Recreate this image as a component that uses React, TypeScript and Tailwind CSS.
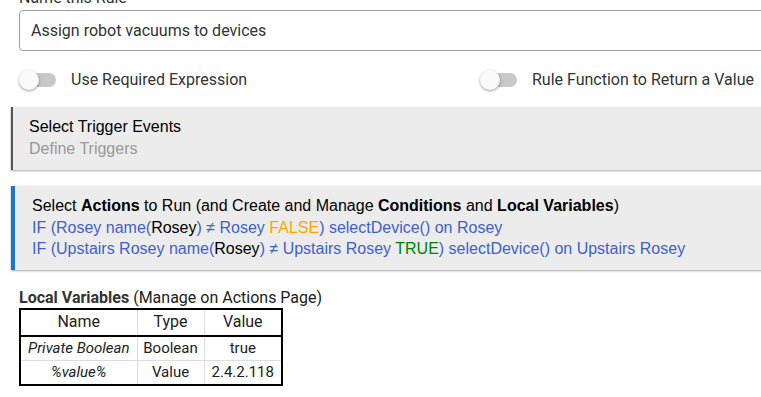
import React from 'react'

function Toggle({ label }: { label: string }) {
  return (
    <div className="flex items-center">
      <div className="relative h-5 w-[37px] shrink-0">
        <div className="absolute left-[3px] right-0 top-[3px] h-[14px] rounded-full bg-[#c8c8c8]" />
        <div className="absolute left-0 top-0 h-5 w-5 rounded-full bg-[#fafafa] shadow-[0_1px_3px_rgba(0,0,0,0.4)]" />
      </div>
      <span className="ml-[15px] text-[16px] leading-5 text-[#333]">{label}</span>
    </div>
  )
}

const blue = 'text-[#3f5fcf]'

export default function App() {
  return (
    <div className="h-[397px] w-[761px] overflow-hidden bg-white font-['Roboto',sans-serif]">
      <div className="-mt-[12px]">
        {/* Rule name */}
        <div className="pl-[19px]">
          <div className="text-[16px] leading-5 text-[#333]">Name this Rule</div>
          <div className="mt-[2px] -mr-[20px] flex h-[41px] items-center rounded-[4px] border border-[#9e9e9e] pl-[11px] text-[16px] text-[#333]">
            Assign robot vacuums to devices
          </div>
        </div>

        {/* Toggles */}
        <div className="mt-[19px] flex pl-[19px]">
          <div className="w-[461px]">
            <Toggle label="Use Required Expression" />
          </div>
          <Toggle label="Rule Function to Return a Value" />
        </div>

        {/* Panels */}
        <div className="ml-[11px] -mr-[10px] mt-[17px] font-['Liberation_Sans',Arial,sans-serif] text-[16px]">
          <div className="border-l-2 border-[#555] bg-[#ececec] pb-[10px] pl-[16px] pt-[9px] leading-[22px] shadow-[0_1px_2px_rgba(0,0,0,0.35)]">
            <div className="text-black">Select Trigger Events</div>
            <div className="text-[#999]">Define Triggers</div>
          </div>

          <div className="mt-[16px] border-l-4 border-[#1976d2] bg-[#ececec] pb-[10px] pl-[17px] pt-[9px] leading-[21.5px] shadow-[0_1px_2px_rgba(0,0,0,0.35)]">
            <div className="text-black">
              Select <b>Actions</b> to Run (and Create and Manage <b>Conditions</b> and <b>Local Variables</b>)
            </div>
            <div className={blue}>
              IF (Rosey name(<span className="text-black">Rosey</span>) ≠ Rosey{' '}
              <span className="text-[#ffa500]">FALSE</span>) selectDevice() on Rosey
            </div>
            <div className={blue}>
              IF (Upstairs Rosey name(<span className="text-black">Rosey</span>) ≠ Upstairs Rosey{' '}
              <span className="text-[#008000]">TRUE</span>) selectDevice() on Upstairs Rosey
            </div>
          </div>
        </div>

        {/* Local variables */}
        <div className="mt-[18px] pl-[19px] text-[#222]">
          <div className="text-[16px] leading-5">
            <b className="font-bold text-[#333]">Local Variables</b> (Manage on Actions Page)
          </div>
          <table className="border-collapse border-2 border-black text-center text-[15px]">
            <thead>
              <tr className="h-[27px] border-b-2 border-black text-[16px]">
                <th className="w-[117px] border-r border-[#ddd] font-normal">Name</th>
                <th className="w-[67px] border-r border-[#ddd] font-normal">Type</th>
                <th className="w-[78px] font-normal">Value</th>
              </tr>
            </thead>
            <tbody>
              <tr className="h-[25px] border-b border-[#ddd]">
                <td className="border-r border-[#ddd] px-[4px] italic">Private Boolean</td>
                <td className="border-r border-[#ddd] px-[4px]">Boolean</td>
                <td className="px-[4px]">true</td>
              </tr>
              <tr className="h-[24px]">
                <td className="border-r border-[#ddd] px-[4px] italic">%value%</td>
                <td className="border-r border-[#ddd] px-[4px]">Value</td>
                <td className="px-[4px]">2.4.2.118</td>
              </tr>
            </tbody>
          </table>
        </div>
      </div>
    </div>
  )
}
